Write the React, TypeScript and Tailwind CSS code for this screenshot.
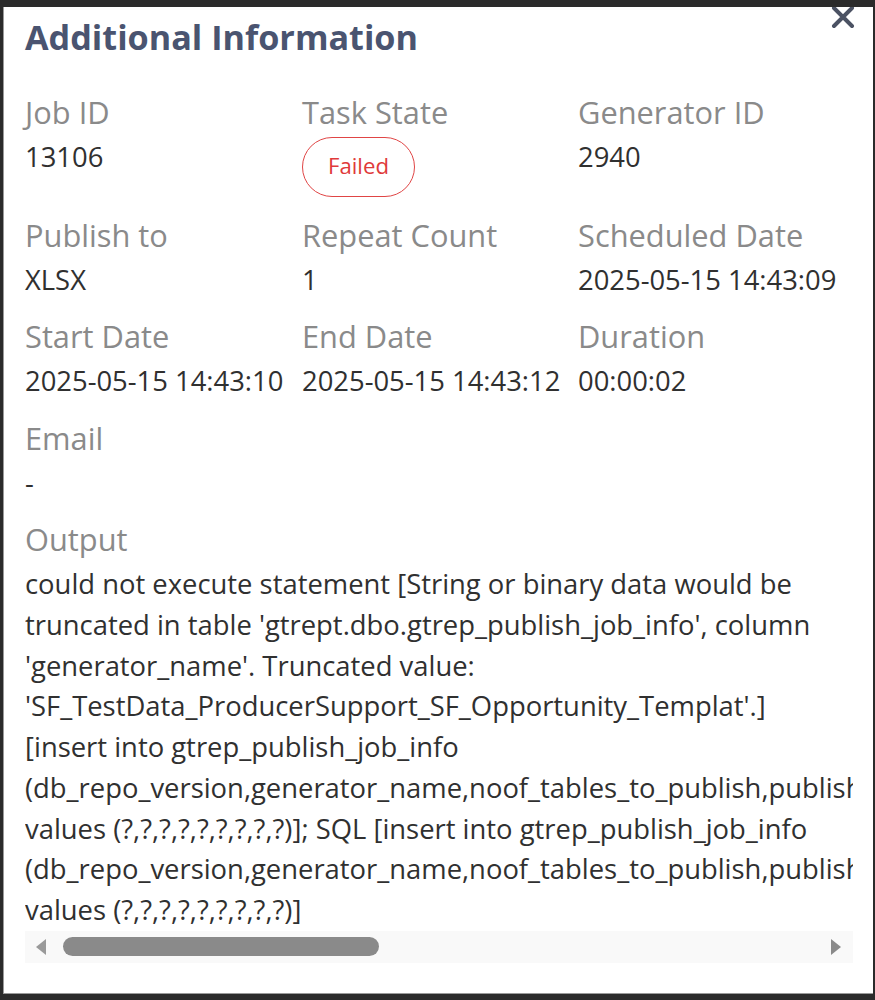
import React from "react";

interface Field {
  label: string;
  value: string;
  badge?: boolean;
}

const rows: Field[][] = [
  [
    { label: "Job ID", value: "13106" },
    { label: "Task State", value: "Failed", badge: true },
    { label: "Generator ID", value: "2940" },
  ],
  [
    { label: "Publish to", value: "XLSX" },
    { label: "Repeat Count", value: "1" },
    { label: "Scheduled Date", value: "2025-05-15 14:43:09" },
  ],
  [
    { label: "Start Date", value: "2025-05-15 14:43:10" },
    { label: "End Date", value: "2025-05-15 14:43:12" },
    { label: "Duration", value: "00:00:02" },
  ],
];

const columns =
  "(db_repo_version,generator_name,noof_tables_to_publish,publish_status,publish_to,job_id,start_date,end_date,user_id)";

const outputLines = [
  "could not execute statement [String or binary data would be",
  "truncated in table 'gtrept.dbo.gtrep_publish_job_info', column",
  "'generator_name'. Truncated value:",
  "'SF_TestData_ProducerSupport_SF_Opportunity_Templat'.]",
  "[insert into gtrep_publish_job_info",
  columns,
  "values (?,?,?,?,?,?,?,?,?)]; SQL [insert into gtrep_publish_job_info",
  columns,
  "values (?,?,?,?,?,?,?,?,?)]",
];

const App: React.FC = () => {
  return (
    <div
      className="w-[875px] h-[1000px] bg-[#2b2b2b] pt-[7px] pl-[3px] pr-[2px] pb-[6px]"
      style={{ fontFamily: '"Open Sans", "Liberation Sans", sans-serif' }}
    >
      <div className="relative h-full bg-white border-b border-l border-[#9a9a9a] pl-[21px] pr-[20px] pt-[9px] overflow-hidden">
        <button className="absolute right-[17px] top-[-3px] text-[#4b5263]" aria-label="Close">
          <svg width="26" height="26" viewBox="0 0 26 26">
            <path d="M4 4 L22 22 M22 4 L4 22" stroke="currentColor" strokeWidth="4" strokeLinecap="round" />
          </svg>
        </button>

        <h2 className="text-[34.2px] leading-[42px] font-bold text-[#4a5470]">Additional Information</h2>

        <div className="mt-[34px] flex flex-col gap-[16px] text-[27.4px] leading-[40.75px]">
          {rows.map((row, i) => (
            <div key={i} className="grid grid-cols-[277px_276px_1fr]">
              {row.map((f) => (
                <div key={f.label} className="flex flex-col gap-[4px] whitespace-nowrap">
                  <span className="text-[30.8px] text-[#8a8a8a]">{f.label}</span>
                  {f.badge ? (
                    <span className="w-[113px] h-[60px] mb-[2px] flex items-center justify-center rounded-full border-[1.5px] border-[#e04545] text-[#e03a3a] text-[22.2px]">
                      {f.value}
                    </span>
                  ) : (
                    <span className="text-[#303030]">{f.value}</span>
                  )}
                </div>
              ))}
            </div>
          ))}

          <div className="flex flex-col gap-[4px]">
            <span className="text-[30.8px] text-[#8a8a8a]">Email</span>
            <span className="text-[#303030]">-</span>
          </div>

          <div className="flex flex-col gap-[4px]">
            <span className="text-[30.8px] text-[#8a8a8a]">Output</span>
            <div className="w-[828px]">
              <div className="overflow-hidden text-[#303030]">
                {outputLines.map((line, i) => (
                  <div key={i} className="whitespace-nowrap">
                    {line}
                  </div>
                ))}
              </div>
              <div className="h-[32px] bg-[#f9f9f9] flex items-center">
                <svg className="ml-[11px]" width="11" height="16" viewBox="0 0 11 16">
                  <path d="M10 0 L0 8 L10 16 Z" fill="#9a9a9a" />
                </svg>
                <div className="ml-[16px] w-[316px] h-[19px] rounded-full bg-[#8a8a8a]" />
                <div className="flex-1" />
                <svg className="mr-[12px]" width="11" height="16" viewBox="0 0 11 16">
                  <path d="M1 0 L11 8 L1 16 Z" fill="#8a8a8a" />
                </svg>
              </div>
            </div>
          </div>
        </div>
      </div>
    </div>
  );
};

export default App;
